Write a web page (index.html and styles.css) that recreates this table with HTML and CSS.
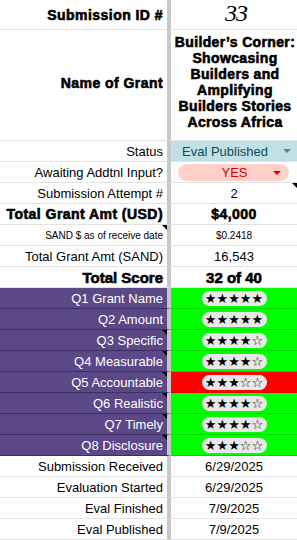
FILE: index.html
```html
<!DOCTYPE html>
<html>
<head>
<meta charset="utf-8">
<link rel="stylesheet" href="styles.css">
</head>
<body>
<div class="sheet">
  <div class="row r-id">
    <div class="lab heavy">Submission ID #</div>
    <div class="val idnum">33</div>
  </div>
  <div class="row r-name">
    <div class="lab heavy">Name of Grant</div>
    <div class="val heavy grant">Builder’s Corner: Showcasing Builders and Amplifying Builders Stories Across Africa</div>
  </div>
  <div class="row">
    <div class="lab">Status</div>
    <div class="val status"><span>Eval Published</span><i class="arrow teal"></i></div>
  </div>
  <div class="row">
    <div class="lab">Awaiting Addtnl Input?</div>
    <div class="val"><div class="pill-yes"><span>YES</span><i class="arrow red"></i></div></div>
  </div>
  <div class="row">
    <div class="lab">Submission Attempt #</div>
    <div class="val note">2</div>
  </div>
  <div class="row">
    <div class="lab heavy">Total Grant Amt (USD)</div>
    <div class="val heavy">$4,000</div>
  </div>
  <div class="row">
    <div class="lab small note">SAND $ as of receive date</div>
    <div class="val small">$0.2418</div>
  </div>
  <div class="row">
    <div class="lab">Total Grant Amt (SAND)</div>
    <div class="val">16,543</div>
  </div>
  <div class="row">
    <div class="lab heavy big">Total Score</div>
    <div class="val heavy big">32 of 40</div>
  </div>
  <div class="row q">
    <div class="lab">Q1 Grant Name</div>
    <div class="val green"><span class="stars">★★★★★</span></div>
  </div>
  <div class="row q">
    <div class="lab">Q2 Amount</div>
    <div class="val green"><span class="stars">★★★★★</span></div>
  </div>
  <div class="row q">
    <div class="lab note">Q3 Specific</div>
    <div class="val green"><span class="stars">★★★★☆</span></div>
  </div>
  <div class="row q">
    <div class="lab note">Q4 Measurable</div>
    <div class="val green"><span class="stars">★★★★☆</span></div>
  </div>
  <div class="row q">
    <div class="lab note">Q5 Accountable</div>
    <div class="val redbg"><span class="stars">★★★☆☆</span></div>
  </div>
  <div class="row q">
    <div class="lab note">Q6 Realistic</div>
    <div class="val green"><span class="stars">★★★★☆</span></div>
  </div>
  <div class="row q">
    <div class="lab note">Q7 Timely</div>
    <div class="val green"><span class="stars">★★★★☆</span></div>
  </div>
  <div class="row q">
    <div class="lab note">Q8 Disclosure</div>
    <div class="val green"><span class="stars">★★★☆☆</span></div>
  </div>
  <div class="row">
    <div class="lab">Submission Received</div>
    <div class="val">6/29/2025</div>
  </div>
  <div class="row">
    <div class="lab">Evaluation Started</div>
    <div class="val">6/29/2025</div>
  </div>
  <div class="row">
    <div class="lab">Eval Finished</div>
    <div class="val">7/9/2025</div>
  </div>
  <div class="row">
    <div class="lab">Eval Published</div>
    <div class="val">7/9/2025</div>
  </div>
</div>
</body>
</html>
```

FILE: styles.css
```css
* { box-sizing: border-box; }
html, body { margin: 0; padding: 0; background: #fff; }
body {
  font-family: "Liberation Sans", Arial, sans-serif;
  font-size: 13px;
  color: #000;
  width: 297px;
  height: 540px;
  overflow: hidden;
}
.sheet { display: flex; flex-direction: column; }
.row {
  display: grid;
  grid-template-columns: 171px 126px;
  height: 21px;
}
.lab, .val {
  border-bottom: 1px solid #e2e2e2;
  display: flex;
  align-items: center;
  position: relative;
}
.lab {
  justify-content: flex-end;
  padding-right: 4px;
  border-right: 4px solid #c8c8c8;
  white-space: nowrap;
}
.val { justify-content: center; }

.r-id { height: 25px; }
.r-name { height: 116px; }

.heavy {
  font-weight: bold;
  font-size: 14px;
  letter-spacing: 0.45px;
  -webkit-text-stroke: 0.6px #000;
}
.big { font-size: 15px; letter-spacing: 0; }
.small { font-size: 10px; }

.idnum {
  font-family: "Liberation Serif", "Times New Roman", serif;
  font-style: italic;
  font-size: 24px;
  padding-bottom: 2px;
  padding-left: 4px;
  letter-spacing: -1px;
}
.grant {
  text-align: center;
  line-height: 16px;
  letter-spacing: 0.35px;
  padding: 0 0 2px 2px;
}

.status {
  background: #bfe0e5;
  color: #0f4a5a;
  justify-content: space-between;
  padding: 0 6px 0 11px;
}
.arrow {
  display: inline-block;
  width: 0; height: 0;
  border-left: 4px solid transparent;
  border-right: 4px solid transparent;
}
.arrow.teal { border-top: 4px solid #4f8796; }
.arrow.red { border-top: 4px solid #e00000; }

.pill-yes {
  width: 111px;
  height: 17px;
  margin-left: -2px;
  border-radius: 9px;
  background: #ffcfc9;
  color: #e00000;
  position: relative;
  display: flex;
  align-items: center;
  justify-content: center;
  padding-left: 3px;
}
.pill-yes .arrow { position: absolute; right: 8px; top: 7px; }

.note::after {
  content: "";
  position: absolute;
  top: 0; right: 0;
  width: 0; height: 0;
  border-top: 5px solid #000;
  border-left: 5px solid transparent;
}

.q .lab {
  background: #5b4886;
  color: #fff;
  border-bottom-color: #3c2d62;
}
.green { background: #00ff00; border-bottom-color: #00d800; }
.redbg { background: #ff0000; border-bottom-color: #e00000; }

.stars {
  font-family: "DejaVu Sans", sans-serif;
  font-size: 13px;
  letter-spacing: 0;
  background: #e8e8e8;
  border-radius: 8px;
  width: 65px;
  height: 15px;
  line-height: 15px;
  text-align: center;
  white-space: nowrap;
  overflow: hidden;
}
```
